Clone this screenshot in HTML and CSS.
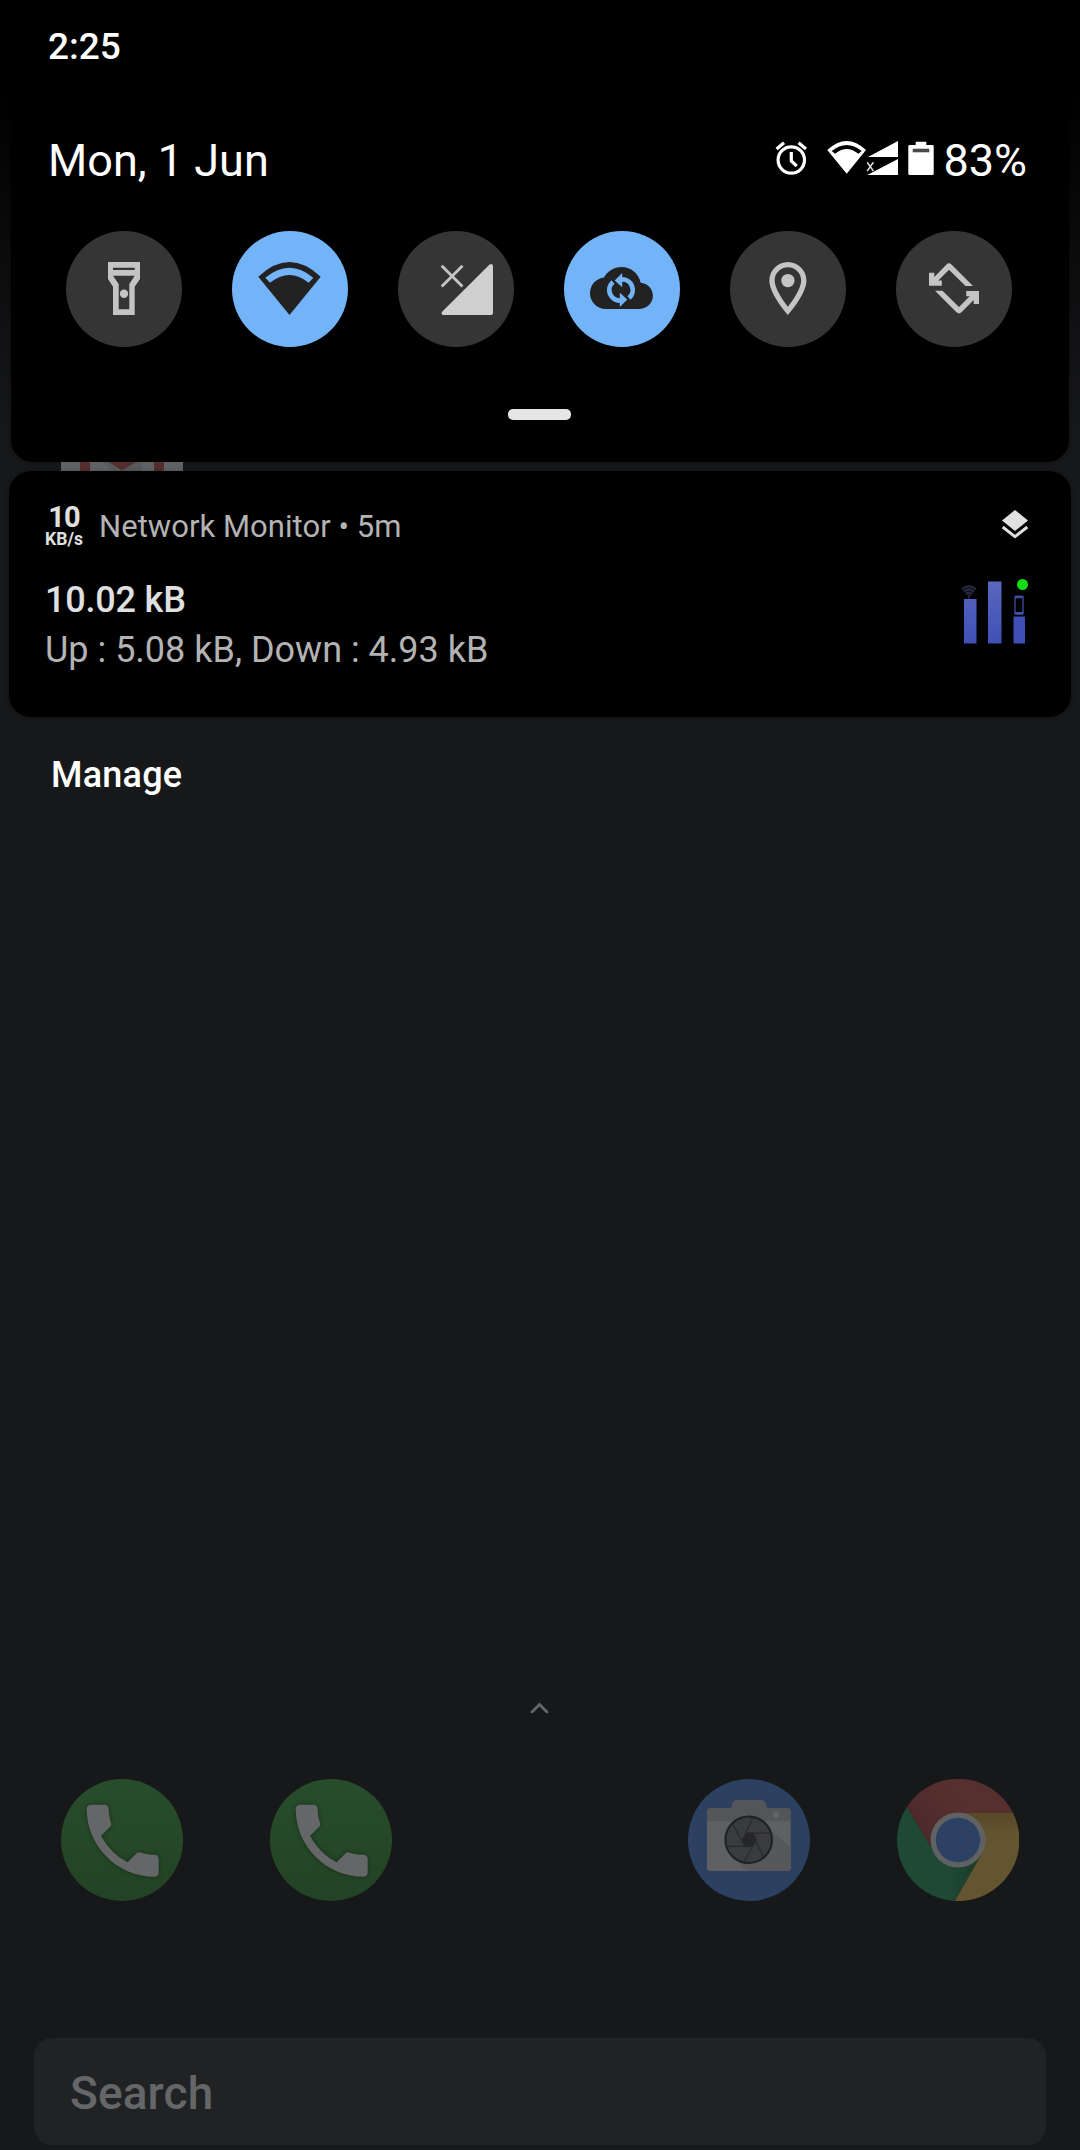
FILE: index.html
```html
<!DOCTYPE html>
<html lang="en">
<head>
    <meta charset="UTF-8">
    <meta name="viewport" content="width=device-width, initial-scale=1.0">
    <title>Notifications</title>
    <link rel="stylesheet" href="styles.css">
</head>
<body>

<div class="screen">
    <header class="quick-settings">
        <div class="clock">2:25</div>
        <div class="date-row">
            <span class="date">Mon, 1 Jun</span>
            <div class="status-icons">
                <svg class="alarm" width="34" height="36" viewBox="0 0 34 36" fill="none" stroke="#fff" stroke-width="3.2">
                    <circle cx="17.3" cy="20" r="13.2"/>
                    <path d="M17.3 12v9l5.4 5M2.6 9l7.4-6.3M32 9l-7.4-6.3"/>
                </svg>
                <svg class="wifi" width="39" height="36" viewBox="0 0 39 36">
                    <path fill="#fff" fill-rule="evenodd" d="M.3 10Q19.7-8 39 10L19.7 33.7zM4.7 11L8 13.8Q19.7 4.4 31.3 13.8L34.7 11Q19.7-1 4.7 11z"/>
                </svg>
                <svg class="signal" width="32" height="36" viewBox="0 0 32 36">
                    <path fill="#fff" d="M32 1v16H2zM32 19v16H1.3z"/>
                    <path stroke="#000" stroke-width="4" d="M1.2 22.3l6.2 8.7M7.4 22.3L1.2 31"/>
                    <path stroke="#ddd" stroke-width="1.5" d="M1.2 22.3l6.2 8.7M7.4 22.3L1.2 31"/>
                </svg>
                <svg class="battery" width="26" height="36" viewBox="0 0 26 36">
                    <path fill="#fff" d="M7.7 1.7h10.6V5h6.2q1.2 0 1.2 1.2v27.6q0 1.2-1.2 1.2h-23Q.3 35 .3 33.8V6.2Q.3 5 1.5 5h6.2z"/>
                    <path fill="#4a4a4a" d="M4.7 8.7h16.6v3.6H4.7z"/>
                </svg>
                <span class="percent">83%</span>
            </div>
        </div>

        <div class="tiles">
            <div class="tile">
                <svg viewBox="0 0 116 116" fill="#c4c4c4">
                    <path fill-rule="evenodd" d="M42 31h32v17l-5.3 7.7V84H47V55.7L42 48zM47 36.7V39h21.7v-2.3zM47 44.7L52.7 53v25.3h10.6V53l5.4-8.3z"/>
                    <circle cx="58" cy="62.7" r="4.2"/>
                </svg>
            </div>
            <div class="tile active">
                <svg viewBox="0 0 116 116" fill="#222">
                    <path fill-rule="evenodd" d="M26.3 45.7Q57.5 16.3 88.7 45.7L57.5 84zM33.3 46.7L38 51.7Q57.5 36.3 76.7 51.7L81.3 46.7Q57.5 26.7 33.3 46.7z"/>
                </svg>
            </div>
            <div class="tile">
                <svg viewBox="0 0 116 116">
                    <path fill="#cfcfcf" d="M91.3 33.7Q95 31.5 95 35.5V82q0 2-2 2H46q-4 0-1.6-3.4z"/>
                    <path stroke="#c4c4c4" stroke-width="2.8" d="M43.7 34.7l20.8 20.8M64.5 34.7L43.7 55.5"/>
                </svg>
            </div>
            <div class="tile active">
                <svg viewBox="0 0 116 116">
                    <path fill="#222" transform="translate(26 25.5) scale(2.62)" d="M19.35 10.04C18.67 6.59 15.64 4 12 4 9.11 4 6.6 5.64 5.35 8.04 2.34 8.36 0 10.91 0 14c0 3.31 2.69 6 6 6h13c2.76 0 5-2.24 5-5 0-2.64-2.05-4.78-4.65-4.96z"/>
                    <g id="sync-half">
                        <path fill="none" stroke="#73b3f7" stroke-width="4.8" d="M57.5 48.5A10.500 10.500 0 0 1 65 67"/>
                        <path fill="#73b3f7" d="M50.7 49.4L58.2 42v14.2z"/>
                    </g>
                    <use href="#sync-half" transform="rotate(180 57 59)"/>
                </svg>
            </div>
            <div class="tile">
                <svg viewBox="0 0 116 116" fill="#c4c4c4">
                    <g transform="translate(26.1 25.7) scale(2.65)">
                        <path fill-rule="evenodd" d="M12 2C8.13 2 5 5.13 5 9c0 5.25 7 13 7 13s7-7.75 7-13c0-3.87-3.13-7-7-7zM7 9c0-2.76 2.24-5 5-5s5 2.24 5 5c0 2.88-2.88 7.19-5 9.88C9.92 16.21 7 11.85 7 9z"/>
                        <circle cx="12" cy="9" r="2.5"/>
                    </g>
                </svg>
            </div>
            <div class="tile">
                <svg viewBox="0 0 116 116" fill="#c4c4c4">
                    <path id="rotate-half" d="M33 54.7V41.7h5.3v4.2L50.5 33.5q2.5-2.3 5 0L77 55h-7.5L53 38.8 42.3 49.6h3.5v5.1z"/>
                    <use href="#rotate-half" transform="rotate(180 58 57.4)"/>
                </svg>
            </div>
        </div>
        <div class="handle"></div>
    </header>

    <!-- slice of the home screen icon between the two cards -->
    <div class="gap">
        <svg width="122" height="9" viewBox="0 0 122 9">
            <path fill="#5f6163" d="M0 0h122v9H0z"/>
            <path fill="#58595b" d="M41 0h40v9H53z"/>
            <path fill="#562d2d" d="M19 0h10v9H19zM93 0h10v9H93zM48 0h27L61 8.5z"/>
        </svg>
    </div>

    <section class="notification">
        <div class="notification-header">
            <div class="speed"><b>10</b><span>KB/s</span></div>
            <span class="app-name">Network Monitor • 5m</span>
            <svg class="layers" width="28" height="30" viewBox="0 0 28 30">
                <path fill="#e0e0e0" d="M14 1l13 10.5L14 22 1 11.5z"/>
                <path fill="none" stroke="#e0e0e0" stroke-width="2.9" d="M1.7 18L14 27.6 26.3 18"/>
            </svg>
        </div>
        <div class="notification-body">
            <div>
                <div class="total">10.02 kB</div>
                <div class="detail">Up : 5.08 kB, Down : 4.93 kB</div>
            </div>
            <svg class="bars" width="70" height="68" viewBox="0 0 70 68">
                <defs>
                    <linearGradient id="bar" x1="0" y1="0" x2="0" y2="1">
                        <stop offset="0" stop-color="#5a67bf"/>
                        <stop offset="1" stop-color="#3f4fb5"/>
                    </linearGradient>
                </defs>
                <path fill="#171826" d="M1.5 11q7.500-6 15 0L10.500 18h-3z"/>
                <path fill="none" stroke="#2b2d42" stroke-width="1.4" d="M1.700 11q7.300-6 14.600 0M4 13.500q5-4 10 0M6 16q3-2.500 6 0M9 17v4"/>
                <path fill="url(#bar)" d="M4 21h12.500v44.500H4zM28 3.500h13.500v62H28z"/>
                <path fill="#3f4fb5" d="M53.500 38.500H65v27H53.500z"/>
                <rect x="55" y="18.500" width="8" height="17.500" rx="1" fill="none" stroke="#36448f" stroke-width="1.500"/>
                <path stroke="#4150a8" stroke-width="2.500" d="M54.700 19h8.600M54.700 35.300h8.600"/>
                <circle cx="62.500" cy="6.500" r="5.500" fill="#12dd12"/>
            </svg>
        </div>
    </section>

    <div class="manage">Manage</div>

    <main class="home">
        <svg class="chevron" width="20" height="13" viewBox="0 0 20 13">
            <path fill="none" stroke="#66676a" stroke-width="2.8" stroke-linecap="round" d="M2 11l7.500-7.500L17 11"/>
        </svg>
        <div class="dock">
            <svg viewBox="0 0 122 122">
                <defs>
                    <linearGradient id="green" x1="0" y1="0" x2="0" y2="1">
                        <stop offset="0" stop-color="#284d2b"/>
                        <stop offset="1" stop-color="#224325"/>
                    </linearGradient>
                </defs>
                <g id="phone">
                    <circle cx="61" cy="61" r="61" fill="url(#green)"/>
                    <path class="handset" transform="translate(13.7 13.7) scale(4)" d="M6.62 10.79c1.44 2.83 3.76 5.14 6.59 6.59l2.2-2.2c.27-.27.67-.36 1.02-.24 1.12.37 2.33.57 3.57.57.55 0 1 .45 1 1V20c0 .55-.45 1-1 1-9.39 0-17-7.61-17-17 0-.55.45-1 1-1h3.5c.55 0 1 .45 1 1 0 1.25.2 2.45.57 3.57.11.35.03.74-.25 1.02l-2.2 2.2z"/>
                </g>
            </svg>
            <svg viewBox="0 0 122 122"><use href="#phone"/></svg>
            <span></span>
            <svg viewBox="0 0 122 122">
                <circle cx="61" cy="61" r="61" fill="#2c4062"/>
                <path fill="#5f6061" d="M19 40h83.7v49q0 3-3 3H22q-3 0-3-3z"/>
                <path fill="#545556" d="M19 42.3V32q0-3 3-3h21l1.7-5.5Q45.5 21 48 21h26q2.3 0 3.3 2.5l2 5.5h20.4q3 0 3 3v10.3z"/>
                <path fill="#57585a" d="M84 52l18.7 16.5V89q0 3-3 3H60L48 81z"/>
                <circle cx="88" cy="36" r="3" fill="#656668"/>
                <circle cx="60.7" cy="60.7" r="23.3" fill="#3a3b3d" stroke="#1f2123" stroke-width="2"/>
                <path fill="#252628" d="M58 54h7.3l3.4 6.3-4.4 7.4H57L53.3 61z"/>
                <path stroke="#28292b" stroke-width="1.2" d="M65.3 38.3L57 54.5M82 54.2H58M75.5 78L65.3 57M56 83l12.5-22.5M39.7 67.4h24.6M44.5 45L57 67"/>
            </svg>
            <svg viewBox="0 0 122 122">
                <defs>
                    <linearGradient id="yellow" x1="0" y1="0" x2="0" y2="1">
                        <stop offset="0" stop-color="#594628"/>
                        <stop offset=".25" stop-color="#63552f"/>
                    </linearGradient>
                    <linearGradient id="red" x1="0" y1=".6" x2=".5" y2=".3">
                        <stop offset="0" stop-color="#4b2a2a"/>
                        <stop offset="1" stop-color="#582f2f"/>
                    </linearGradient>
                    <linearGradient id="teal" x1="0" y1="0" x2="1" y2="0">
                        <stop offset=".6" stop-color="#1e4a35"/>
                        <stop offset="1" stop-color="#1c3a2b"/>
                    </linearGradient>
                </defs>
                <path fill="url(#teal)" d="M10 27.7A61 61 0 0 0 58 122L84 76 61 61 33.7 68z"/>
                <path fill="url(#yellow)" d="M115.7 33.3A61 61 0 0 1 58 122L84 76 61 61V33.3z"/>
                <path fill="url(#red)" d="M10 27.7A61 61 0 0 1 115.7 33.3H61V61L33.7 68z"/>
                <circle cx="61" cy="61" r="27.5" fill="#5f6162"/>
                <circle cx="61" cy="61" r="22.2" fill="#2d4165"/>
            </svg>
        </div>
        <div class="search">Search</div>
    </main>
</div>

</body>
</html>
```
FILE: styles.css
```css
body {
    margin: 0;
    background-color: #17181a;
    font-family: Roboto, sans-serif;
    color: #fff;
}
svg {
    display: block;
}
.screen {
    display: flex;
    flex-direction: column;
    width: 1080px;
    height: 2150px;
    overflow: hidden;
    background: linear-gradient(#000 90px, #17181a 430px);
}
.quick-settings {
    box-sizing: border-box;
    height: 462px;
    margin: 0 11px;
    padding-top: 25px;
    background-color: #000;
    border-radius: 0 0 22px 22px;
    box-shadow: 0 1px 5px rgba(0, 0, 0, 0.3);
}
.clock {
    padding-left: 37px;
    font-size: 37px;
    font-weight: 500;
    line-height: 44px;
}
.date-row {
    display: flex;
    justify-content: space-between;
    height: 54px;
    margin: 65px 42px 0 37px;
}
.date, .percent {
    font-size: 45px;
    line-height: 54px;
    white-space: nowrap;
}
.status-icons {
    display: flex;
}
.status-icons svg {
    margin-top: 6px;
}
.status-icons .wifi {
    margin-left: 19px;
}
.status-icons .battery {
    margin-left: 10px;
    margin-right: 9px;
}
.tiles {
    display: flex;
    gap: 50px;
    margin: 43px 0 0 55px;
}
.tile {
    width: 116px;
    height: 116px;
    border-radius: 50%;
    background-color: #353535;
}
.tile.active {
    background-color: #73b3f7;
}
.handle {
    width: 63px;
    height: 11px;
    margin: 62px 0 0 497px;
    border-radius: 5px;
    background-color: #e6e6e6;
}
.gap {
    height: 9px;
    padding-left: 61px;
}
.notification {
    box-sizing: border-box;
    height: 246px;
    margin: 0 9px;
    padding: 33px 36px 0;
    background-color: #000;
    border-radius: 22px;
    box-shadow: 0 1px 5px rgba(0, 0, 0, 0.3);
}
.notification-header {
    display: flex;
    height: 44px;
}
.speed {
    width: 40px;
    margin-left: -1px;
    color: #e0e0e0;
    text-align: center;
}
.speed b, .speed span {
    display: block;
}
.speed b {
    font-size: 29px;
    font-weight: 700;
    line-height: 27px;
    letter-spacing: -1px;
}
.speed span {
    font-size: 17.5px;
    font-weight: 700;
    line-height: 16px;
}
.app-name {
    margin-left: 15px;
    color: #b3b3b3;
    font-size: 31px;
    line-height: 46px;
    letter-spacing: 0.05px;
}
.layers {
    margin: 5px 6px 0 auto;
}
.notification-body {
    display: flex;
    justify-content: space-between;
}
.total {
    margin-top: 31px;
    color: #e0e0e0;
    font-size: 36px;
    font-weight: 500;
    line-height: 42px;
    letter-spacing: -0.2px;
}
.detail {
    margin-top: 8px;
    color: #b3b3b3;
    font-size: 36px;
    line-height: 42px;
}
.bars {
    margin: 30px 5px 0 0;
}
.manage {
    padding: 37px 0 0 51px;
    font-size: 36px;
    font-weight: 500;
    line-height: 42px;
    letter-spacing: 0.2px;
}
.home {
    display: flex;
    flex: 1;
    flex-direction: column;
    padding-top: 905px;
}
.chevron {
    margin-left: 530px;
}
.dock {
    display: grid;
    grid-template-columns: repeat(5, 122px);
    gap: 87px;
    margin: 65px 0 0 61px;
}
.handset {
    fill: #656668;
    filter: drop-shadow(0.5px 0.7px 0.5px rgba(0, 0, 0, 0.4));
}
.search {
    height: 107px;
    margin: 137px 34px 0;
    padding-left: 36px;
    border-radius: 18px;
    background-color: #212224;
    color: #656668;
    font-size: 46px;
    font-weight: 500;
    line-height: 110px;
    letter-spacing: 0.1px;
}
```
